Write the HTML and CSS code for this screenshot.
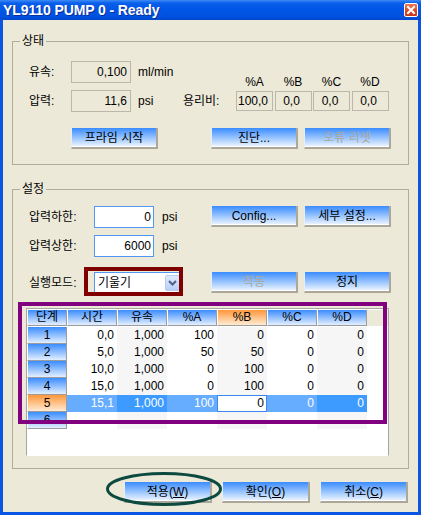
FILE: index.html
```html
<!DOCTYPE html>
<html lang="ko">
<head>
<meta charset="utf-8">
<title>YL9110 PUMP 0 - Ready</title>
<link rel="stylesheet" href="styles.css">
</head>
<body>
<div class="window">
  <div class="titlebar">
    <span class="title">YL9110 PUMP 0 - Ready</span>
    <span class="close"><svg viewBox="0 0 12 12" width="12" height="12"><path d="M3 3 L9 9 M9 3 L3 9" stroke="#fff" stroke-width="2" stroke-linecap="square"/></svg></span>
  </div>
  <div class="client">
    <section class="group group-status">
      <div class="group-title">상태</div>
      <div class="status-top">
        <div class="fields">
          <span class="label">유속:</span><span class="ro-field">0,100</span><span class="unit">ml/min</span>
          <span class="label">압력:</span><span class="ro-field">11,6</span><span class="unit">psi</span>
        </div>
        <div class="ratio">
          <span></span><span class="ratio-head">%A</span><span class="ratio-head">%B</span><span class="ratio-head">%C</span><span class="ratio-head">%D</span>
          <span class="label">용리비:</span><span class="ratio-box">100,0</span><span class="ratio-box">0,0</span><span class="ratio-box">0,0</span><span class="ratio-box">0,0</span>
        </div>
      </div>
      <div class="btn-row">
        <button class="btn">프라임 시작</button>
        <button class="btn btn-push">진단...</button>
        <button class="btn" disabled>오류 리셋</button>
      </div>
    </section>

    <section class="group group-settings">
      <div class="group-title">설정</div>
      <div class="settings-grid">
        <span class="label">압력하한:</span><span class="field">0</span><span class="unit unit-wide">psi</span><button class="btn">Config...</button><button class="btn btn-end">세부 설정...</button>
        <span class="label">압력상한:</span><span class="field">6000</span><span class="unit unit-wide">psi</span>
      </div>
      <div class="mode-row">
        <span class="label label-mode">실행모드:</span>
        <div class="select">
          <span class="select-text">기울기</span>
          <span class="select-btn"><svg viewBox="0 0 9 6" width="9" height="6"><path d="M1 1 L4.5 4.5 L8 1" fill="none" stroke="#4D6185" stroke-width="2"/></svg></span>
          <span class="mark-red"></span>
        </div>
        <button class="btn btn-run" disabled>작동</button>
        <button class="btn">정지</button>
      </div>
      <div class="grid-box">
        <div class="grid">
          <div class="gh">단계</div><div class="gh">시간</div><div class="gh">유속</div><div class="gh">%A</div><div class="gh orange">%B</div><div class="gh">%C</div><div class="gh">%D</div><div class="gh filler"></div>

          <div class="rh">1</div><div class="cell">0,0</div><div class="cell alt">1,000</div><div class="cell">100</div><div class="cell alt">0</div><div class="cell">0</div><div class="cell alt">0</div><div class="cell"></div>
          <div class="rh">2</div><div class="cell">5,0</div><div class="cell alt">1,000</div><div class="cell">50</div><div class="cell alt">50</div><div class="cell">0</div><div class="cell alt">0</div><div class="cell"></div>
          <div class="rh">3</div><div class="cell">10,0</div><div class="cell alt">1,000</div><div class="cell">0</div><div class="cell alt">100</div><div class="cell">0</div><div class="cell alt">0</div><div class="cell"></div>
          <div class="rh">4</div><div class="cell">15,0</div><div class="cell alt">1,000</div><div class="cell">0</div><div class="cell alt">100</div><div class="cell">0</div><div class="cell alt">0</div><div class="cell"></div>
          <div class="rh orange">5</div><div class="cell sel-light">15,1</div><div class="cell sel-dark">1,000</div><div class="cell sel-light">100</div><div class="cell edit">0</div><div class="cell sel-light">0</div><div class="cell sel-dark">0</div><div class="cell"></div>
          <div class="rh">6</div><div class="cell"></div><div class="cell alt"></div><div class="cell"></div><div class="cell alt"></div><div class="cell"></div><div class="cell alt"></div><div class="cell"></div>
        </div>
        <span class="mark-purple"></span>
      </div>
    </section>

    <div class="footer">
      <span class="apply-wrap">
        <button class="btn btn-wide">적용(<u>W</u>)</button>
        <svg class="mark-ellipse" viewBox="0 0 116 34" width="116" height="34"><ellipse cx="58" cy="17" rx="56.5" ry="15.5" fill="none" stroke="#0C4A3F" stroke-width="3"/></svg>
      </span>
      <button class="btn btn-wide">확인(<u>O</u>)</button>
      <button class="btn btn-wide">취소(<u>C</u>)</button>
    </div>
  </div>
</div>
</body>
</html>
```

FILE: styles.css
```css
html, body {
  margin: 0;
  padding: 0;
}

body {
  font-family: "Liberation Sans", "Noto Sans CJK KR", sans-serif;
  font-size: 12px;
  color: #000;
  background: #fff;
}

.window {
  width: 421px;
  height: 515px;
  background: #0A55E2;
  display: flex;
  flex-direction: column;
}

.titlebar {
  height: 20px;
  flex: none;
  display: flex;
  align-items: center;
  justify-content: space-between;
  padding: 0 3px 0 3px;
  background: linear-gradient(#3F8CF6 0px, #0A60EA 3px, #0056E6 9px, #0051DD 17px, #0047CE 20px);
}

.title {
  color: #fff;
  font-family: "Liberation Sans", sans-serif;
  font-weight: bold;
  font-size: 14px;
  line-height: 20px;
  text-shadow: 1px 1px 0 #0A2F9C;
  letter-spacing: -0.1px;
}

.close {
  width: 14px;
  height: 14px;
  box-sizing: border-box;
  border: 1px solid #fff;
  border-radius: 2px;
  background: linear-gradient(#EC7A57, #D9451E 60%, #C7381A);
  display: flex;
  align-items: center;
  justify-content: center;
}

.close svg {
  display: block;
}

.client {
  flex: 1;
  margin: 0 3px 3px;
  background: #ECE9D8;
}

/* group boxes */
.group {
  margin: 21px 9px 0;
  border: 1px solid #B0AD9C;
  padding: 0 17px 15px 16px;
}

.group-settings {
  margin-top: 24px;
  padding-bottom: 12px;
}

.group-title {
  width: fit-content;
  margin: -8px 0 0 -9px;
  padding: 0 2px;
  height: 14px;
  line-height: 14px;
  background: #ECE9D8;
}

.label {
  line-height: 14px;
}

.unit {
  line-height: 14px;
  padding-left: 7px;
}

.unit-wide {
  padding-left: 8px;
}

/* status */
.status-top {
  display: flex;
  align-items: flex-end;
  margin-top: 13px;
}

.fields {
  display: grid;
  grid-template-columns: 42px 60px 52px;
  grid-auto-rows: 22px;
  row-gap: 7px;
  align-items: center;
}

.ro-field,
.field {
  height: 22px;
  box-sizing: border-box;
  border: 1px solid #BAB8AA;
  text-align: right;
  padding-right: 3px;
  line-height: 20px;
}

.field {
  background: #fff;
  border-color: #4F97F3;
  padding-right: 2px;
}

.ratio {
  display: grid;
  grid-template-columns: 51.5px repeat(4, 37px);
  grid-template-rows: 14px 20px;
  column-gap: 1.5px;
  row-gap: 2px;
  align-items: center;
  margin-bottom: 1px;
}

.ratio-head {
  text-align: center;
  line-height: 14px;
}

.ratio-box {
  height: 20px;
  box-sizing: border-box;
  border: 1px solid #BAB8AA;
  line-height: 18px;
  text-align: center;
  padding-right: 3px;
}

/* buttons */
.btn {
  font: inherit;
  color: #000;
  width: 87px;
  height: 21px;
  padding: 0;
  box-sizing: border-box;
  border: 0;
  border-left: 1px solid #E6EEFA;
  border-right: 2px solid #ACA899;
  border-bottom: 2px solid #ACA899;
  background: linear-gradient(#3A8CFF, #9EC8FF 55%, #F2F7FF);
  box-shadow: inset 0 -1px 0 #fff;
  line-height: 18px;
  white-space: nowrap;
}

.btn:disabled {
  color: #ACA899;
}

.btn-row {
  display: flex;
  gap: 6px;
  margin-top: 16px;
  padding-left: 42px;
}

.btn-push {
  margin-left: 47px;
}

.btn-wide {
  width: 88px;
}

/* settings */
.settings-grid {
  display: grid;
  grid-template-columns: 65px 60px 57px 87px 93px;
  grid-auto-rows: 22px;
  row-gap: 7px;
  align-items: center;
  margin-top: 10px;
}

.settings-grid .btn {
  align-self: start;
}

.btn-end {
  justify-self: end;
}

.mode-row {
  display: flex;
  align-items: center;
  gap: 6px;
  margin-top: 15px;
}

.label-mode {
  width: 59px;
}

.select {
  position: relative;
  width: 88px;
  height: 21px;
  box-sizing: border-box;
  border: 1px solid #4F97F3;
  background: #fff;
  display: flex;
  align-items: center;
  justify-content: space-between;
  padding-left: 3px;
}

.select-text {
  line-height: 14px;
}

.select-btn {
  width: 15px;
  height: 16px;
  box-sizing: border-box;
  margin-right: 1px;
  border: 1px solid #B6CAF2;
  border-radius: 2px;
  background: linear-gradient(#DFE9FC, #B9CEF8);
  display: flex;
  align-items: center;
  justify-content: center;
}

.select-btn svg {
  display: block;
}

.mark-red {
  position: absolute;
  left: -11px;
  top: -6px;
  width: 99px;
  height: 29px;
  box-sizing: border-box;
  border: 4px solid #800000;
  pointer-events: none;
}

.btn-run {
  margin-left: 23px;
}

/* grid */
.grid-box {
  position: relative;
  width: 363px;
  height: 148px;
  box-sizing: border-box;
  margin: 15px 0 0 -3px;
  border: 1px solid #A7A6A0;
  border-bottom-color: #fff;
  background: #fff;
  padding-top: 1px;
}

.grid {
  display: grid;
  grid-template-columns: 40px repeat(6, 50px) 1fr;
  grid-auto-rows: 17px;
}

.gh,
.rh {
  box-sizing: border-box;
  text-align: center;
  background: linear-gradient(#3B8DFF, #E4EFFF);
  border-left: 1px solid #fff;
  border-right: 1px solid #9C9C9C;
  border-bottom: 1px solid #9C9C9C;
}

.gh {
  height: 16px;
  line-height: 15px;
}

.rh {
  height: 17px;
  line-height: 16px;
}

.gh.orange,
.rh.orange {
  background: linear-gradient(#FF973A, #FFEBD4);
}

.gh.filler {
  background: #ECE9D8;
  border: 0;
}

.cell {
  line-height: 17px;
  text-align: right;
  padding-right: 3px;
}

.alt {
  background: #F6F6F6;
}

.sel-light {
  background: #66ACFF;
  color: #fff;
}

.sel-dark {
  background: #3D9BFF;
  color: #fff;
}

.edit {
  background: #fff;
  border: 1px solid #3B86F0;
  line-height: 15px;
  padding-right: 2px;
}

.mark-purple {
  position: absolute;
  left: -9px;
  top: -7px;
  width: 369px;
  height: 122px;
  box-sizing: border-box;
  border: 4px solid #800080;
  pointer-events: none;
}

/* footer */
.footer {
  display: flex;
  justify-content: flex-end;
  gap: 10px;
  margin-top: 13px;
  padding-right: 10px;
}

.apply-wrap {
  position: relative;
  display: flex;
}

.mark-ellipse {
  position: absolute;
  left: -18px;
  top: -10px;
  overflow: visible;
  pointer-events: none;
}

u {
  text-underline-offset: 1px;
}
```
